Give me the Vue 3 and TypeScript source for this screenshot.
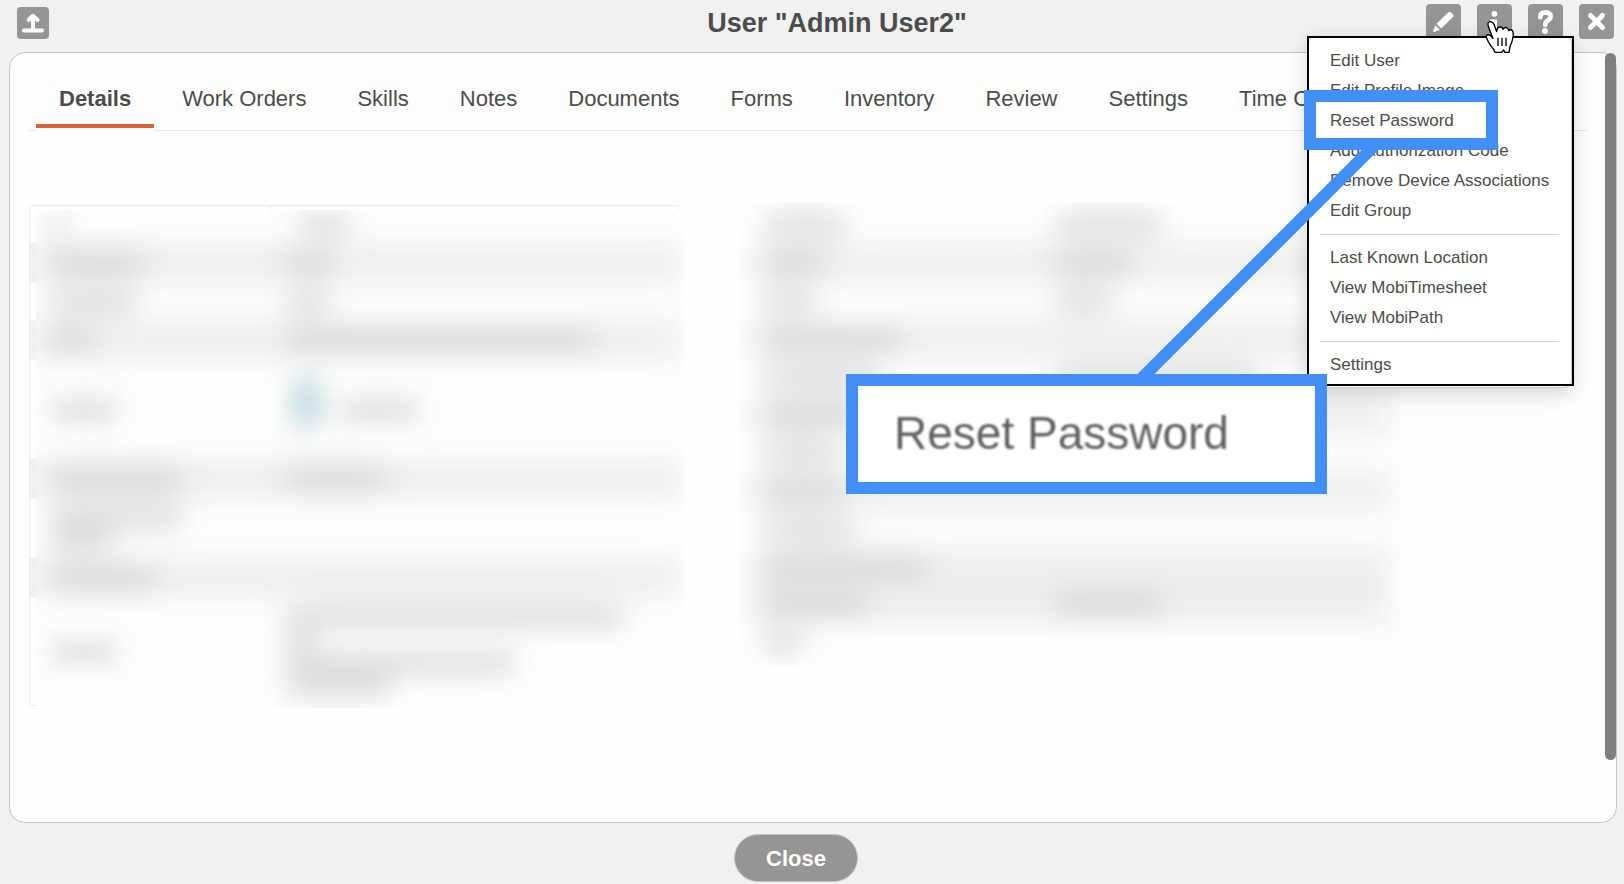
<script setup lang="ts">
import { ref } from 'vue'

interface Bar {
  width: number
  indent?: number
}

interface Row {
  height: number
  striped?: boolean
  label: Bar[]
  value: Bar[]
  avatar?: boolean
}

const tabs: string[] = [
  'Details',
  'Work Orders',
  'Skills',
  'Notes',
  'Documents',
  'Forms',
  'Inventory',
  'Review',
  'Settings',
  'Time C',
]
const activeTab = ref('Details')

const menuGroups: string[][] = [
  [
    'Edit User',
    'Edit Profile Image',
    'Reset Password',
    'Add Authorization Code',
    'Remove Device Associations',
    'Edit Group',
  ],
  ['Last Known Location', 'View MobiTimesheet', 'View MobiPath'],
  ['Settings'],
]

const leftRows: Row[] = [
  { height: 38, label: [{ width: 16 }], value: [{ width: 50, indent: 12 }] },
  { height: 40, striped: true, label: [{ width: 92 }], value: [{ width: 46 }] },
  { height: 37, label: [{ width: 86 }], value: [{ width: 42 }] },
  { height: 40, striped: true, label: [{ width: 44 }], value: [{ width: 304 }] },
  { height: 99, label: [{ width: 66 }], value: [{ width: 80 }], avatar: true },
  { height: 40, striped: true, label: [{ width: 130 }], value: [{ width: 98 }] },
  { height: 59, label: [{ width: 132 }, { width: 62 }], value: [] },
  { height: 39, striped: true, label: [{ width: 104 }], value: [] },
  {
    height: 109,
    label: [{ width: 66 }],
    value: [{ width: 336 }, { width: 26 }, { width: 228 }, { width: 104 }],
  },
]

const rightRows: Row[] = [
  { height: 38, label: [{ width: 80 }], value: [{ width: 106 }] },
  { height: 38, striped: true, label: [{ width: 60 }], value: [{ width: 76 }] },
  { height: 38, label: [{ width: 50 }], value: [{ width: 56 }] },
  { height: 38, striped: true, label: [{ width: 136 }], value: [] },
  { height: 38, label: [{ width: 112 }], value: [{ width: 200 }] },
  { height: 38, striped: true, label: [{ width: 92 }], value: [] },
  { height: 38, label: [{ width: 74 }], value: [] },
  { height: 38, striped: true, label: [{ width: 78 }], value: [] },
  { height: 38, label: [{ width: 88 }], value: [] },
  { height: 38, striped: true, label: [{ width: 162 }], value: [] },
  { height: 38, striped: true, label: [{ width: 102 }], value: [{ width: 106 }] },
  { height: 38, label: [{ width: 36 }], value: [] },
]

const tables = [
  { name: 'primary', rows: leftRows },
  { name: 'secondary', rows: rightRows },
]
</script>

<template>
  <div class="dialog">
    <header class="header">
      <button class="icon-button small" type="button" aria-label="Upload">
        <svg viewBox="0 0 32 32" fill="none" stroke="#fff" stroke-width="4" stroke-linecap="round" stroke-linejoin="round">
          <path d="M7 23.5H25" />
          <path d="M16 23V10" />
          <path d="M11.5 13L16 8.8L20.5 13" />
        </svg>
      </button>
      <h1 class="title">User "Admin User2"</h1>
      <div class="actions">
        <button class="icon-button" type="button" aria-label="Edit">
          <svg viewBox="0 0 35 35" fill="#fff">
            <path d="M22.2 8.6Q23.6 7.4 24.8 8.2L27.2 10.4Q28.2 11.6 27 12.9L15.2 24.6L10.6 19.8Z" />
            <path d="M9.4 21.2L13.9 25.8L8.4 28Q6.8 28.2 7.3 26.6Z" />
          </svg>
        </button>
        <div class="menu-anchor">
          <button class="icon-button" type="button" aria-label="More actions" aria-expanded="true">
            <svg viewBox="0 0 35 35" fill="#fff">
              <circle cx="17.4" cy="9.8" r="2.9" />
              <path d="M13 15.5H20V25H22V28H13V25H15V18H13Z" />
            </svg>
          </button>

          <div class="menu-frame">
            <div class="menu">
              <ul v-for="(group, index) in menuGroups" :key="index" class="menu-group">
                <li v-for="item in group" :key="item">
                  <button class="menu-item" type="button">{{ item }}</button>
                </li>
              </ul>
            </div>
            <div class="menu-outline"></div>
            <svg class="connector" viewBox="0 0 260 260" aria-hidden="true">
              <path d="M10 250L250 10" stroke="#4290f7" stroke-width="12" />
            </svg>
            <div class="highlight"></div>
            <div class="callout"><span>Reset Password</span></div>
          </div>

          <svg class="cursor" viewBox="604 60 90 102" aria-hidden="true">
            <path
              d="M613 74Q612 65 621 65Q628 66 631 73L639 95Q640 82 648 81Q656 80 658 88Q664 80 670 84Q674 86 675 92Q682 86 687 93Q690 101 688 112L684 128Q678 138 678 147L676 157L664 157L660 150L654 157L634 157Q630 146 622 138Q612 124 608 112Q607 105 614 104Q620 105 628 116L615 82Z"
              fill="#fff"
              stroke="#000"
              stroke-width="4"
              stroke-linejoin="round"
            />
            <path d="M643 113V138M655 113V138M667 113V138" stroke="#000" stroke-width="4" />
          </svg>
        </div>
        <button class="icon-button" type="button" aria-label="Help">
          <svg viewBox="0 0 35 35">
            <path
              d="M12.2 13.2Q12.2 8.4 17.3 8.4Q22.6 8.4 22.6 12.6Q22.6 15 19.6 16.8Q17.2 18.2 17.2 21"
              fill="none"
              stroke="#fff"
              stroke-width="4.6"
              stroke-linecap="round"
            />
            <circle cx="17" cy="27" r="3" fill="#fff" />
          </svg>
        </button>
        <button class="icon-button" type="button" aria-label="Close dialog">
          <svg viewBox="0 0 35 35">
            <path d="M11.5 11.5L23.5 23.5M23.5 11.5L11.5 23.5" stroke="#fff" stroke-width="5" stroke-linecap="round" />
          </svg>
        </button>
      </div>
    </header>

    <main class="panel">
      <nav class="tabs" role="tablist">
        <button
          v-for="tab in tabs"
          :key="tab"
          type="button"
          role="tab"
          class="tab"
          :class="{ active: tab === activeTab }"
          :aria-selected="tab === activeTab"
          @click="activeTab = tab"
        >
          {{ tab }}
        </button>
      </nav>

      <div class="columns">
        <div v-for="table in tables" :key="table.name" class="column" :class="table.name">
          <div class="mask">
            <div class="sheet">
              <table class="details">
                <tbody>
                  <tr
                    v-for="(row, index) in table.rows"
                    :key="index"
                    :class="{ striped: row.striped }"
                    :style="{ height: row.height + 'px' }"
                  >
                    <th scope="row">
                      <span v-for="(bar, i) in row.label" :key="i" class="bar" :style="{ width: bar.width + 'px' }"></span>
                    </th>
                    <td>
                      <div class="value">
                        <span v-if="row.avatar" class="avatar"></span>
                        <div>
                          <span
                            v-for="(bar, i) in row.value"
                            :key="i"
                            class="bar"
                            :style="{ width: bar.width + 'px', marginLeft: (bar.indent ?? 0) + 'px' }"
                          ></span>
                        </div>
                      </div>
                    </td>
                  </tr>
                </tbody>
              </table>
            </div>
          </div>
        </div>
      </div>
      <div class="scroll-thumb"></div>
    </main>

    <footer class="footer">
      <button class="close" type="button">Close</button>
    </footer>
  </div>
</template>

<style>
body {
  margin: 0;
  background: #f1f1f1;
}
</style>

<style scoped>
.dialog {
  box-sizing: border-box;
  display: flex;
  flex-direction: column;
  min-height: 100vh;
  overflow: hidden;
  background: #f1f1f1;
  color: #4c4c4c;
  font-family: 'Liberation Sans', Arial, sans-serif;
}

button {
  border: 0;
  margin: 0;
  padding: 0;
  background: none;
  color: inherit;
  font: inherit;
  cursor: pointer;
}

.header {
  display: flex;
  align-items: flex-start;
  height: 52px;
  padding: 0 10px 0 17px;
}

.title {
  flex: 1;
  margin: 0;
  padding-left: 199px;
  text-align: center;
  font-size: 27px;
  line-height: 46px;
  font-weight: 700;
}

.actions {
  display: flex;
  gap: 16px;
  padding-top: 4px;
}

.icon-button {
  display: block;
  width: 35px;
  height: 35px;
  border-radius: 4px;
  background: #979494;
}

.icon-button.small {
  width: 32px;
  height: 32px;
  margin-top: 7px;
}

.icon-button svg {
  display: block;
  width: 100%;
  height: 100%;
}

.menu-anchor {
  position: relative;
  z-index: 5;
}

.menu-frame {
  position: absolute;
  top: 32px;
  right: -62px;
  width: 267px;
  height: 350px;
}

.menu {
  box-sizing: border-box;
  width: 264px;
  margin-left: 1px;
  height: 352px;
  padding: 10px 0 0;
  border: 1px solid #c8c8c8;
  border-top: 0;
  border-radius: 8px;
  background: #fff;
  box-shadow: 0 6px 22px rgba(0, 0, 0, 0.17);
}

.menu-outline {
  position: absolute;
  inset: 0;
  border: 2px solid #000;
}

.menu-group {
  margin: 0;
  padding: 0;
  list-style: none;
}

.menu-group + .menu-group {
  margin-top: 8px;
}

.menu-group + .menu-group::before {
  content: '';
  display: block;
  height: 1px;
  margin: 0 12px 8px 11px;
  background: #d4d4d4;
}

.menu-item {
  display: block;
  width: 100%;
  padding-left: 21px;
  text-align: left;
  white-space: nowrap;
  font-size: 17px;
  line-height: 30px;
}

.highlight {
  position: absolute;
  top: 54px;
  left: -3px;
  box-sizing: border-box;
  width: 194px;
  height: 60px;
  border: 12px solid #4290f7;
}

.connector {
  position: absolute;
  top: 96px;
  left: -179px;
  width: 260px;
  height: 260px;
}

.callout {
  position: absolute;
  top: 338px;
  left: -461px;
  box-sizing: border-box;
  width: 481px;
  height: 120px;
  padding-left: 36px;
  border: 12px solid #4290f7;
  background: #fff;
  color: #606060;
  font-size: 46px;
  line-height: 94px;
  white-space: nowrap;
}

.callout span {
  filter: blur(1px);
}

.cursor {
  position: absolute;
  top: 16px;
  left: 8px;
  width: 30px;
  height: 34px;
}

.panel {
  position: relative;
  flex: 1;
  box-sizing: border-box;
  margin: 0 7px 0 9px;
  padding: 0 29px 0 19px;
  border: 1px solid #c4c4c4;
  border-radius: 16px;
  background: #fefefe;
}

.tabs {
  display: flex;
  gap: 5px;
  padding-left: 7px;
  border-bottom: 1px solid #e6e6e6;
  white-space: nowrap;
}

.tab {
  position: relative;
  margin-bottom: -1px;
  padding: 34px 23px 20px;
  font-size: 22px;
  line-height: 24px;
}

.tab.active {
  background: #fefefe;
  font-weight: 700;
}

.tab.active::after {
  content: '';
  position: absolute;
  right: 0;
  bottom: 3px;
  left: 0;
  height: 4px;
  background: #d9643a;
}

.columns {
  display: grid;
  grid-template-columns: 648fr 658fr;
  align-items: start;
  column-gap: 61px;
  margin-top: 74px;
  padding-right: 12%;
}

.column {
  position: relative;
  display: flow-root;
}

.primary {
  background: linear-gradient(
      #fefefe 38px,
      #f0f0f0 38px 78px,
      #fefefe 78px 115px,
      #f0f0f0 115px 155px,
      #fefefe 155px 254px,
      #f0f0f0 254px 294px,
      #fefefe 294px 353px,
      #f0f0f0 353px 392px,
      #fefefe 392px
    )
    left top / 7px 100% no-repeat;
}

.primary::before {
  content: '';
  position: absolute;
  inset: 0;
  border: 1px solid #ececec;
  border-right: 0;
}

.primary::after {
  content: '';
  position: absolute;
  top: 0;
  right: 0;
  left: 37%;
  height: 5px;
  border: solid #ececec;
  border-width: 0 1px;
}

.mask {
  position: relative;
  overflow: hidden;
  background: #fefefe;
}

.primary .mask {
  margin: 5px -5px -2px 7px;
}

.primary .sheet {
  margin: -5px 5px 2px -7px;
}

.secondary .mask {
  margin-top: -3px;
}

.secondary .sheet {
  padding: 4px 10px 3px;
}

.sheet {
  filter: blur(14px);
}

.details {
  width: 100%;
  table-layout: fixed;
  border-collapse: collapse;
}

.details th {
  box-sizing: border-box;
  width: 37%;
  padding: 0 0 0 22px;
}

.secondary .details th {
  width: 47%;
  padding-left: 15px;
}

.details td {
  padding: 0 0 0 17px;
}

.secondary .details td {
  padding-left: 5px;
}

.striped {
  background: #ededed;
}

.value {
  display: flex;
  align-items: center;
  gap: 20px;
}

.avatar {
  width: 26px;
  height: 50px;
  margin: -14px 0 0 6px;
  border-radius: 12px;
  background: #b4d0d6;
}

.bar {
  display: block;
  height: 16px;
  background: #cecece;
}

.bar + .bar {
  margin-top: 7px;
}

.scroll-thumb {
  position: absolute;
  top: 0;
  right: 0;
  width: 11px;
  height: 92%;
  border-radius: 6px;
  background: #7f7f7f;
}

.footer {
  display: flex;
  justify-content: center;
  padding: 11px 32px 2px 0;
}

.close {
  padding: 1px 31px 0;
  border: 1px solid #c4c4c4;
  border-radius: 24px;
  background: #979494;
  color: #fff;
  font-size: 22px;
  font-weight: 700;
  line-height: 45px;
}
</style>
